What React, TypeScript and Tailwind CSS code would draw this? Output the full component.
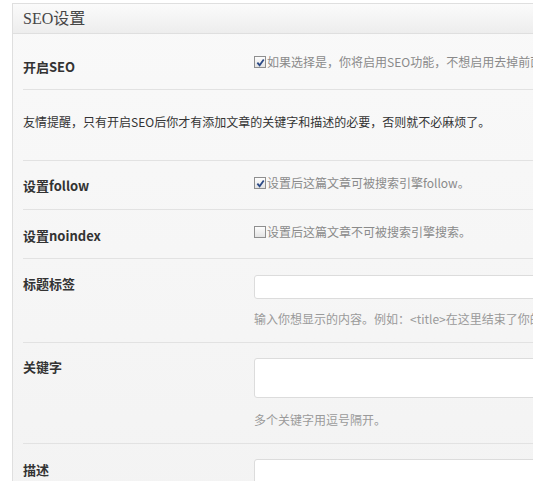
import { ReactElement, ReactNode } from 'react'

const cjk = "font-['Noto_Sans_CJK_SC',sans-serif]"

const Check = ({ checked }: { checked: boolean }) => (
  <span className="mr-[1px] inline-flex h-[12px] w-[12px] shrink-0 items-center justify-center border border-[#8f8f8f] bg-gradient-to-b from-[#fdfdfd] to-[#e3e3e3]">
    {checked && (
      <svg viewBox="0 0 10 10" className="h-[9px] w-[9px]">
        <path d="M1.5 5.2 L4 8 L8.6 1.6" fill="none" stroke="#2c4a86" strokeWidth="2" />
      </svg>
    )}
  </span>
)

const Row = ({
  h,
  label,
  labelPt,
  rightPt,
  children,
  last,
}: {
  h: string
  label?: string
  labelPt: string
  rightPt?: string
  children?: ReactNode
  last?: boolean
}) => (
  <div className={`flex ${h} ${last ? '' : 'border-b border-[#e2e2e2]'}`}>
    <div className={`w-[231px] shrink-0 ${labelPt} text-[13px] leading-[18px] font-bold text-[#333]`}>
      {label}
    </div>
    <div className={`flex-1 ${rightPt}`}>{children}</div>
  </div>
)

export default function App(): ReactElement {
  return (
    <div className={`h-[481px] w-[533px] overflow-hidden bg-white pt-[3px] pl-[12px] ${cjk}`}>
      <div className="w-[560px] border border-r-0 border-[#dfdfdf] bg-gradient-to-b from-[#f9f9f9] to-[#f3f3f3]">
        <div className="flex h-[30px] items-center border-b border-[#dfdfdf] bg-gradient-to-b from-[#fbfbfb] to-[#ededed] pl-[10px]">
          <span className="font-['Liberation_Serif','Noto_Sans_CJK_SC',serif] text-[16px] text-[#464646]">
            SEO设置
          </span>
        </div>
        <div className="ml-[10px]">
          <Row h="h-[56px]" label="开启SEO" labelPt="pt-[24px]" rightPt="pt-[19px]">
            <div className="flex items-center whitespace-nowrap text-[12px] leading-[18px] text-[#8a8a8a]">
              <Check checked />
              如果选择是，你将启用SEO功能，不想启用去掉前面的勾
            </div>
          </Row>
          <div className="h-[71px] border-b border-[#e2e2e2] pt-[23px] text-[12px] leading-[18px] whitespace-nowrap text-[#333]">
            友情提醒，只有开启SEO后你才有添加文章的关键字和描述的必要，否则就不必麻烦了。
          </div>
          <Row h="h-[49px]" label="设置follow" labelPt="pt-[16px]" rightPt="pt-[13px]">
            <div className="flex items-center whitespace-nowrap text-[12px] leading-[18px] text-[#8a8a8a]">
              <Check checked />
              设置后这篇文章可被搜索引擎follow。
            </div>
          </Row>
          <Row h="h-[49px]" label="设置noindex" labelPt="pt-[17px]" rightPt="pt-[13px]">
            <div className="flex items-center whitespace-nowrap text-[12px] leading-[18px] text-[#8a8a8a]">
              <Check checked={false} />
              设置后这篇文章不可被搜索引擎搜索。
            </div>
          </Row>
          <Row h="h-[84px]" label="标题标签" labelPt="pt-[16px]" rightPt="pt-[16px]">
            <div className="h-[24px] w-[300px] rounded-[3px] border border-[#dcdcdc] bg-white" />
            <div className="mt-[11px] whitespace-nowrap text-[12px] leading-[18px] text-[#9a9a9a]">
              输入你想显示的内容。例如：&lt;title&gt;在这里结束了你的标题
            </div>
          </Row>
          <Row h="h-[101px]" label="关键字" labelPt="pt-[15px]" rightPt="pt-[15px]">
            <div className="h-[40px] w-[300px] rounded-[3px] border border-[#dcdcdc] bg-white" />
            <div className="mt-[13px] whitespace-nowrap text-[12px] leading-[18px] text-[#9a9a9a]">
              多个关键字用逗号隔开。
            </div>
          </Row>
          <Row h="h-[60px]" label="描述" labelPt="pt-[17px]" rightPt="pt-[15px]" last>
            <div className="h-[60px] w-[300px] rounded-[3px] border border-[#dcdcdc] bg-white" />
          </Row>
        </div>
      </div>
    </div>
  )
}
